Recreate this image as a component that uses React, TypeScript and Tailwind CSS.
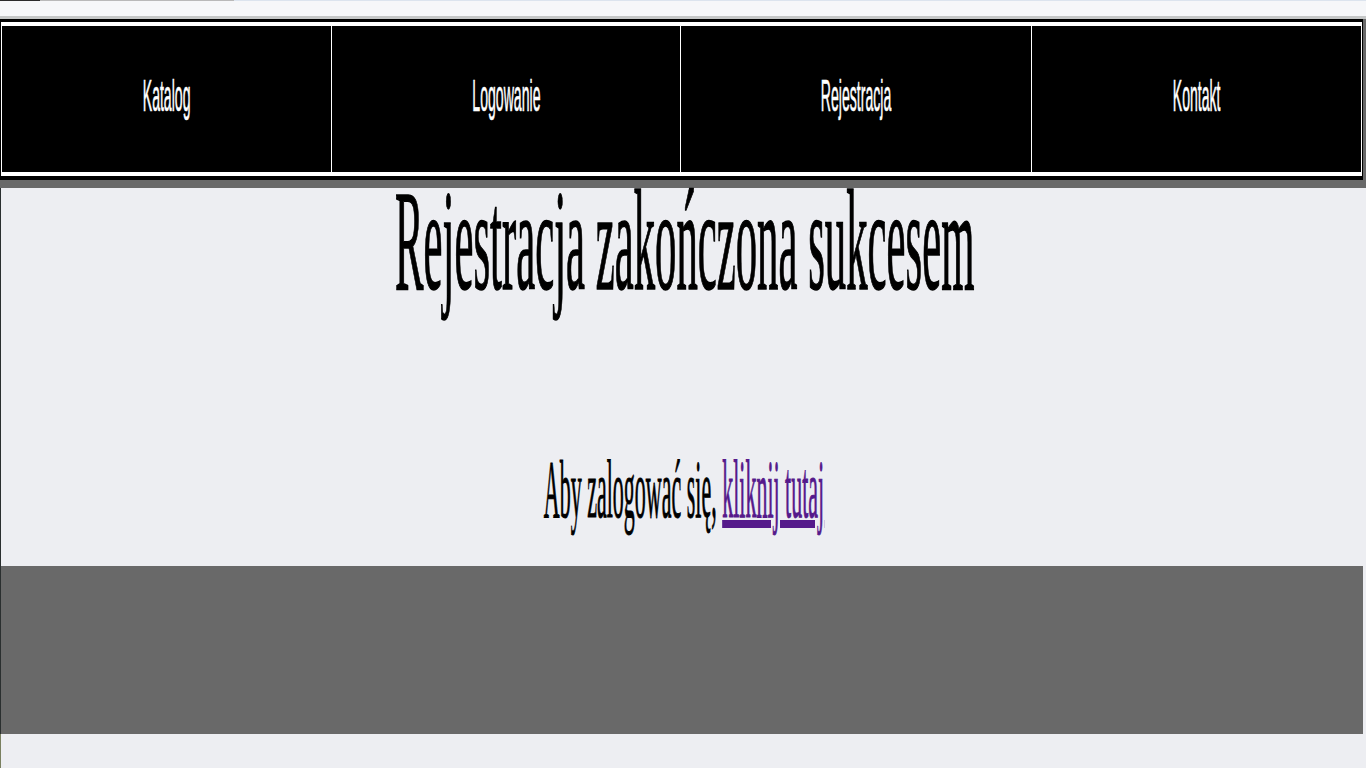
import React from "react";

const navItems = ["Katalog", "Logowanie", "Rejestracja", "Kontakt"];

export default function App() {
  return (
    <div className="w-[1366px] h-[768px] overflow-hidden bg-[#edeef2] flex flex-col">
      {/* top strip */}
      <div className="flex h-px shrink-0">
        <div className="w-[40px] bg-[#2b2b2b]" />
        <div className="w-[194px] bg-[#b9b9b9]" />
        <div className="flex-1 bg-[#dce4ee]" />
      </div>
      <div className="h-[15px] shrink-0 bg-[#f6f7f9]" />
      <div className="h-[3px] shrink-0 bg-[#c5c7c7]" />

      {/* header */}
      <div className="shrink-0 bg-[#696969] pr-[3px] pb-[8px]">
        <div className="bg-black pt-[3px] pb-[4px] pl-px pr-px">
          <div className="bg-white pt-[4px] pb-[4px] pl-px pr-px">
            <div className="grid grid-cols-[329px_348px_350px_329px] gap-px">
              {navItems.map((item) => (
                <div
                  key={item}
                  className="h-[146px] bg-black flex items-center justify-center pb-[6px]"
                >
                  <span
                    className="inline-block shrink-0 whitespace-nowrap text-white text-[44px] leading-none scale-x-[0.32] [-webkit-text-stroke:0.6px_white]"
                    style={{ fontFamily: '"Liberation Sans", Arial, sans-serif' }}
                  >
                    {item}
                  </span>
                </div>
              ))}
            </div>
          </div>
        </div>
      </div>

      {/* main */}
      <div
        className="h-[378px] shrink-0 border-l border-[#2a2f2f] flex flex-col text-black"
        style={{ fontFamily: '"Liberation Serif", "Times New Roman", serif' }}
      >
        <div className="flex justify-center -mt-[18px] ml-[2px]">
          <h1 className="inline-block shrink-0 whitespace-nowrap text-[143px] leading-none font-normal scale-x-[0.299] [-webkit-text-stroke:1.5px_black]">
            Rejestracja zakończona sukcesem
          </h1>
        </div>
        <div className="flex justify-center mt-[135px] ml-[1px]">
          <p className="inline-block shrink-0 whitespace-nowrap text-[83px] leading-none scale-x-[0.265] [-webkit-text-stroke:1px_black]">
            Aby zalogować się,{" "}
            <a
              href="#"
              className="text-[#551a8b] underline decoration-[8px] underline-offset-[3px] [-webkit-text-stroke:1px_#551a8b]"
            >
              kliknij tutaj
            </a>
          </p>
        </div>
      </div>

      {/* footer */}
      <div className="h-[168px] shrink-0 border-l border-[#2a2f2f] pr-[3px] bg-[#edeef2]">
        <div className="h-full bg-[#696969]" />
      </div>
      <div className="flex-1 border-l border-[#7a8060] bg-[#edeef2]" />
    </div>
  );
}
